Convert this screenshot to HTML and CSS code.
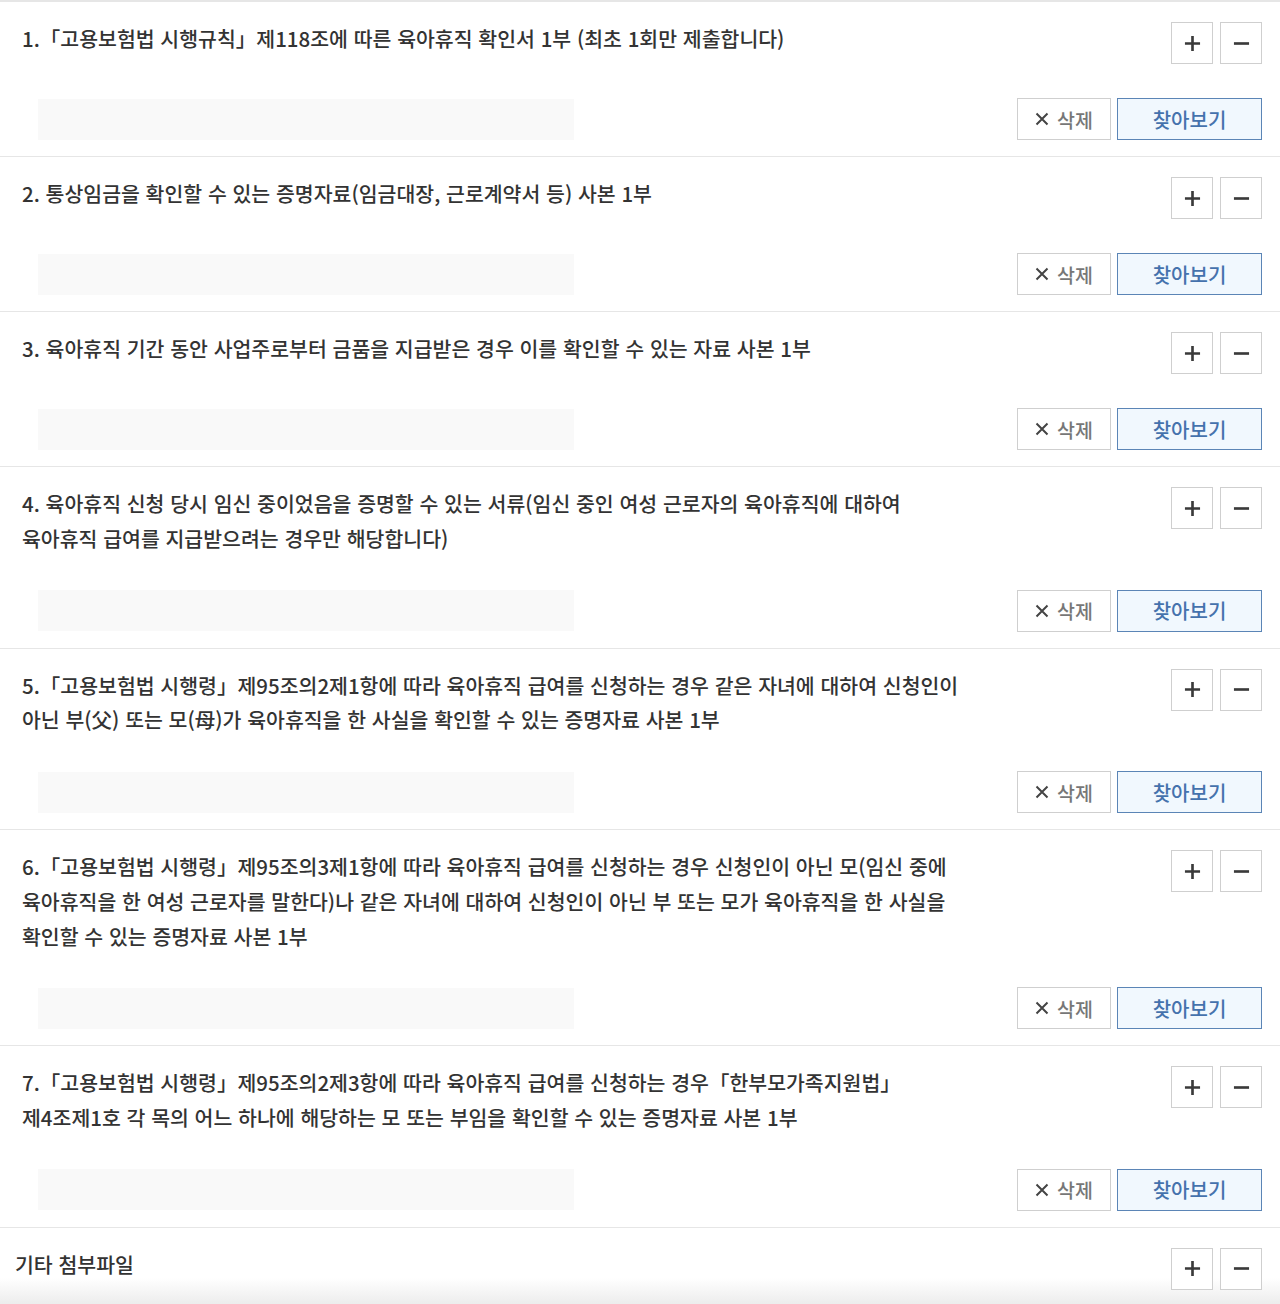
FILE: index.html
```html
<!DOCTYPE html>
<html lang="ko">
<head>
  <meta charset="UTF-8">
  <meta name="viewport" content="width=device-width, initial-scale=1.0"/>
  <title>첨부파일</title>
  <link rel="stylesheet" href="styles.css">
</head>
<body>
  <div class="file-list">

    <!-- 1 -->
    <div class="file-item">
      <div class="item-head">
        <p class="item-title">1.「고용보험법 시행규칙」제118조에 따른 육아휴직 확인서 1부 (최초 1회만 제출합니다)</p>
        <div class="count-btns">
          <button class="btn-sq"><svg viewBox="0 0 18 18"><path d="M9 1v16M1 9h16"/></svg></button>
          <button class="btn-sq"><svg viewBox="0 0 18 18"><path d="M1 9h16"/></svg></button>
        </div>
      </div>
      <div class="item-file">
        <div class="file-box"></div>
        <div class="file-btns">
          <button class="btn-del"><svg viewBox="0 0 14 14"><path d="M1.5 1.5l11 11M12.5 1.5l-11 11"/></svg>삭제</button>
          <button class="btn-find">찾아보기</button>
        </div>
      </div>
    </div>

    <!-- 2 -->
    <div class="file-item">
      <div class="item-head">
        <p class="item-title">2. 통상임금을 확인할 수 있는 증명자료(임금대장, 근로계약서 등) 사본 1부</p>
        <div class="count-btns">
          <button class="btn-sq"><svg viewBox="0 0 18 18"><path d="M9 1v16M1 9h16"/></svg></button>
          <button class="btn-sq"><svg viewBox="0 0 18 18"><path d="M1 9h16"/></svg></button>
        </div>
      </div>
      <div class="item-file">
        <div class="file-box"></div>
        <div class="file-btns">
          <button class="btn-del"><svg viewBox="0 0 14 14"><path d="M1.5 1.5l11 11M12.5 1.5l-11 11"/></svg>삭제</button>
          <button class="btn-find">찾아보기</button>
        </div>
      </div>
    </div>

    <!-- 3 -->
    <div class="file-item">
      <div class="item-head">
        <p class="item-title">3. 육아휴직 기간 동안 사업주로부터 금품을 지급받은 경우 이를 확인할 수 있는 자료 사본 1부</p>
        <div class="count-btns">
          <button class="btn-sq"><svg viewBox="0 0 18 18"><path d="M9 1v16M1 9h16"/></svg></button>
          <button class="btn-sq"><svg viewBox="0 0 18 18"><path d="M1 9h16"/></svg></button>
        </div>
      </div>
      <div class="item-file">
        <div class="file-box"></div>
        <div class="file-btns">
          <button class="btn-del"><svg viewBox="0 0 14 14"><path d="M1.5 1.5l11 11M12.5 1.5l-11 11"/></svg>삭제</button>
          <button class="btn-find">찾아보기</button>
        </div>
      </div>
    </div>

    <!-- 4 -->
    <div class="file-item">
      <div class="item-head">
        <p class="item-title">4. 육아휴직 신청 당시 임신 중이었음을 증명할 수 있는 서류(임신 중인 여성 근로자의 육아휴직에 대하여<br>육아휴직 급여를 지급받으려는 경우만 해당합니다)</p>
        <div class="count-btns">
          <button class="btn-sq"><svg viewBox="0 0 18 18"><path d="M9 1v16M1 9h16"/></svg></button>
          <button class="btn-sq"><svg viewBox="0 0 18 18"><path d="M1 9h16"/></svg></button>
        </div>
      </div>
      <div class="item-file">
        <div class="file-box"></div>
        <div class="file-btns">
          <button class="btn-del"><svg viewBox="0 0 14 14"><path d="M1.5 1.5l11 11M12.5 1.5l-11 11"/></svg>삭제</button>
          <button class="btn-find">찾아보기</button>
        </div>
      </div>
    </div>

    <!-- 5 -->
    <div class="file-item">
      <div class="item-head">
        <p class="item-title">5.「고용보험법 시행령」제95조의2제1항에 따라 육아휴직 급여를 신청하는 경우 같은 자녀에 대하여 신청인이<br>아닌 부(父) 또는 모(母)가 육아휴직을 한 사실을 확인할 수 있는 증명자료 사본 1부</p>
        <div class="count-btns">
          <button class="btn-sq"><svg viewBox="0 0 18 18"><path d="M9 1v16M1 9h16"/></svg></button>
          <button class="btn-sq"><svg viewBox="0 0 18 18"><path d="M1 9h16"/></svg></button>
        </div>
      </div>
      <div class="item-file">
        <div class="file-box"></div>
        <div class="file-btns">
          <button class="btn-del"><svg viewBox="0 0 14 14"><path d="M1.5 1.5l11 11M12.5 1.5l-11 11"/></svg>삭제</button>
          <button class="btn-find">찾아보기</button>
        </div>
      </div>
    </div>

    <!-- 6 -->
    <div class="file-item">
      <div class="item-head">
        <p class="item-title">6.「고용보험법 시행령」제95조의3제1항에 따라 육아휴직 급여를 신청하는 경우 신청인이 아닌 모(임신 중에<br>육아휴직을 한 여성 근로자를 말한다)나 같은 자녀에 대하여 신청인이 아닌 부 또는 모가 육아휴직을 한 사실을<br>확인할 수 있는 증명자료 사본 1부</p>
        <div class="count-btns">
          <button class="btn-sq"><svg viewBox="0 0 18 18"><path d="M9 1v16M1 9h16"/></svg></button>
          <button class="btn-sq"><svg viewBox="0 0 18 18"><path d="M1 9h16"/></svg></button>
        </div>
      </div>
      <div class="item-file">
        <div class="file-box"></div>
        <div class="file-btns">
          <button class="btn-del"><svg viewBox="0 0 14 14"><path d="M1.5 1.5l11 11M12.5 1.5l-11 11"/></svg>삭제</button>
          <button class="btn-find">찾아보기</button>
        </div>
      </div>
    </div>

    <!-- 7 -->
    <div class="file-item">
      <div class="item-head">
        <p class="item-title">7.「고용보험법 시행령」제95조의2제3항에 따라 육아휴직 급여를 신청하는 경우「한부모가족지원법」<br>제4조제1호 각 목의 어느 하나에 해당하는 모 또는 부임을 확인할 수 있는 증명자료 사본 1부</p>
        <div class="count-btns">
          <button class="btn-sq"><svg viewBox="0 0 18 18"><path d="M9 1v16M1 9h16"/></svg></button>
          <button class="btn-sq"><svg viewBox="0 0 18 18"><path d="M1 9h16"/></svg></button>
        </div>
      </div>
      <div class="item-file">
        <div class="file-box"></div>
        <div class="file-btns">
          <button class="btn-del"><svg viewBox="0 0 14 14"><path d="M1.5 1.5l11 11M12.5 1.5l-11 11"/></svg>삭제</button>
          <button class="btn-find">찾아보기</button>
        </div>
      </div>
    </div>

    <!-- 기타 -->
    <div class="file-item etc">
      <div class="item-head">
        <p class="item-title">기타 첨부파일</p>
        <div class="count-btns">
          <button class="btn-sq"><svg viewBox="0 0 18 18"><path d="M9 1v16M1 9h16"/></svg></button>
          <button class="btn-sq"><svg viewBox="0 0 18 18"><path d="M1 9h16"/></svg></button>
        </div>
      </div>
    </div>

  </div>
</body>
</html>
```

FILE: styles.css
```css
* {
  box-sizing: border-box;
  margin: 0;
  padding: 0;
  font-family: 'Noto Sans CJK KR', 'Noto Sans', sans-serif;
}

body {
  background: #fff;
  color: #333;
}

.file-list {
  border-top: 2px solid #e6e6e6;
}

.file-item {
  padding: 20px 18px 16px 22px;
  border-bottom: 1px solid #e6e6e6;
}

.item-head {
  display: flex;
  justify-content: space-between;
  align-items: flex-start;
  min-height: 42px;
}

.item-title {
  font-size: 20.5px;
  font-weight: 500;
  line-height: 34.75px;
  margin-top: -1px;
  color: #333;
}

.count-btns {
  display: flex;
  gap: 7px;
}

.btn-sq {
  display: flex;
  align-items: center;
  justify-content: center;
  width: 42px;
  height: 42px;
  border: 1px solid #cfcfcf;
  background: #fff;
  cursor: pointer;
}

.btn-sq svg {
  width: 17px;
  height: 17px;
  stroke: #3a3a3a;
  stroke-width: 2.8;
  fill: none;
}

.item-file {
  display: flex;
  justify-content: space-between;
  align-items: center;
  margin-top: 34px;
}

.file-box {
  width: 536px;
  height: 41px;
  margin-left: 16px;
  background: #f9f9f9;
}

.file-btns {
  display: flex;
  gap: 6px;
}

.btn-del {
  display: flex;
  align-items: center;
  justify-content: center;
  width: 94px;
  height: 42px;
  border: 1px solid #cfcfcf;
  background: #fff;
  color: #777;
  font-size: 19.5px;
  font-weight: 500;
  cursor: pointer;
}

.btn-del svg {
  width: 14px;
  height: 14px;
  margin-right: 8px;
  stroke: #444;
  stroke-width: 2;
  fill: none;
}

.btn-find {
  width: 145px;
  height: 42px;
  border: 1px solid #5b85b6;
  background: #f1f8fe;
  color: #4572ad;
  font-size: 20px;
  font-weight: 500;
  cursor: pointer;
}

.etc {
  padding-left: 15px;
  border-bottom: none;
  height: 78px;
  background: linear-gradient(to bottom, #fff 0, #fff 50px, #ebebeb 78px);
}
```
